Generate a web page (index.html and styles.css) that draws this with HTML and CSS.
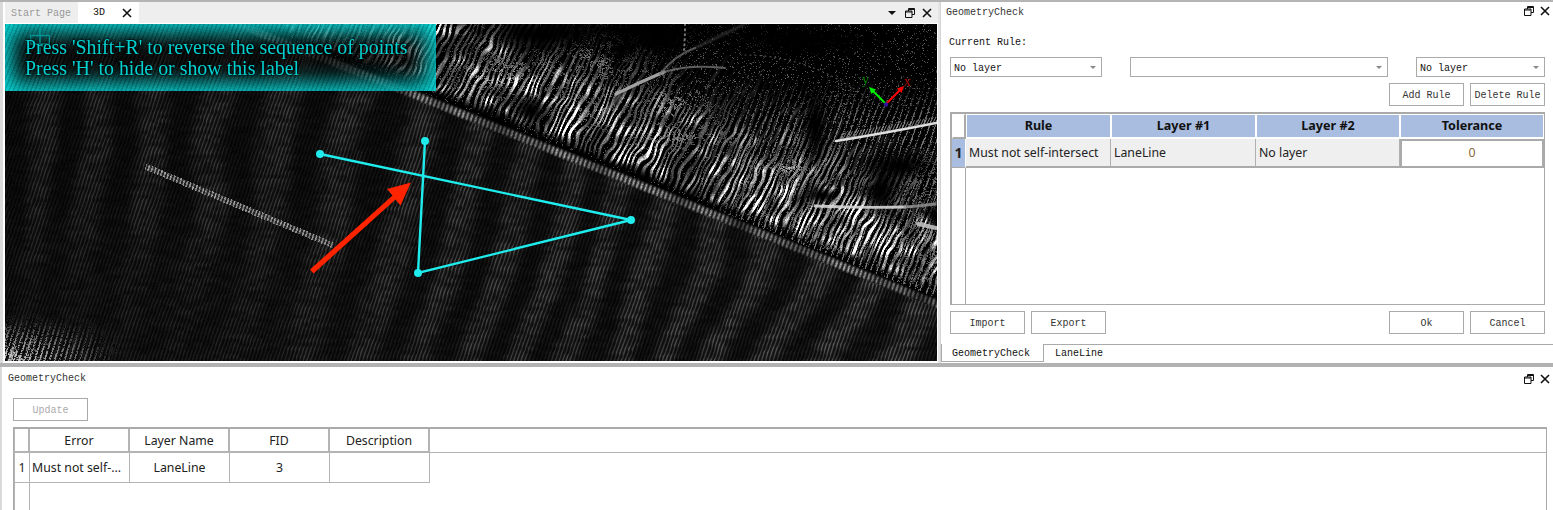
FILE: index.html
```html
<!DOCTYPE html>
<html lang="en">
<head>
<meta charset="utf-8">
<title>GeometryCheck</title>
<link rel="stylesheet" href="styles.css">
</head>
<body>
<svg class="defs" width="0" height="0" aria-hidden="true">
  <symbol id="i-restore" viewBox="0 0 10 10"><path d="M3.5 .5h6v6h-2.5M3.5 .5v2.5M3.5 1.5h6" fill="none" stroke="#111" stroke-width="1"/><path d="M.5 3h6.5v6.5h-6.5z" fill="none" stroke="#111"/><path d="M.5 4h6.5" stroke="#111"/></symbol>
  <symbol id="i-close" viewBox="0 0 10 10"><path d="M1 1l8 8M9 1l-8 8" fill="none" stroke="#111" stroke-width="1.6"/></symbol>
</svg>
<div class="app">
  <div class="top">
    <section class="doc">
      <div class="tabbar">
        <div class="tab tab-off">Start Page</div>
        <div class="tab tab-on">3D<svg class="ic tab-x"><use href="#i-close"/></svg></div>
        <div class="tabbar-tools">
          <span class="menu-arrow"></span>
          <svg class="ic"><use href="#i-restore"/></svg>
          <svg class="ic"><use href="#i-close"/></svg>
        </div>
      </div>
      <div class="viewer">
        <canvas id="cloud" class="cloud" width="932" height="337"></canvas>
        <svg class="overlay" viewBox="5 24 932 337" width="932" height="337">
          <polyline class="poly" points="320,154 631,220 418,273 425,141"/>
          <circle class="pt" cx="320" cy="154" r="4"/>
          <circle class="pt" cx="425" cy="141" r="4"/>
          <circle class="pt" cx="418" cy="273" r="4"/>
          <circle class="pt" cx="631" cy="220" r="4"/>
          <path class="red" d="M313.5 273.5L310 269.5L392.5 195.5L387 189L411 182.5L400.5 205.5L395.5 199.500Z"/>
          <path class="ax-x" d="M886 104L900 90"/><path class="ax-xh" d="M904 86L897 88.500L901.500 93Z"/>
          <path class="ax-y" d="M886 104L873 91"/><path class="ax-yh" d="M869 87L871.500 94L876 89.500Z"/>
          <circle class="ax-o" cx="886" cy="104.500" r="2.200"/>
          <text class="ax-tx" x="904" y="86">x</text>
          <text class="ax-ty" x="862" y="84">y</text>
        </svg>
        <div class="hint">
          <svg class="ime" width="20" height="24" viewBox="0 0 20 24"><path d="M.5 6.500h19v8.500h-19zM10 0v24" fill="none" stroke="#0aa" stroke-width="1.500"/></svg>
          <p>Press 'Shift+R' to reverse the sequence of points</p>
          <p>Press 'H' to hide or show this label</p>
        </div>
      </div>
    </section>
    <div class="vsplit"></div>
    <section class="side">
      <header class="title"><span>GeometryCheck</span><span class="tools"><svg class="ic"><use href="#i-restore"/></svg><svg class="ic"><use href="#i-close"/></svg></span></header>
      <div class="side-body">
        <div class="cur">Current Rule:</div>
        <div class="combos">
          <div class="combo c1">No layer<i></i></div>
          <div class="combo c2"><i></i></div>
          <div class="combo c3">No layer<i></i></div>
        </div>
        <div class="btnrow end">
          <button class="btn">Add Rule</button>
          <button class="btn">Delete Rule</button>
        </div>
        <div class="gridwrap rules">
          <table class="rt">
            <colgroup><col class="r0"><col class="r1"><col class="r1"><col class="r2"><col class="r2"></colgroup>
            <thead><tr><th class="corner"></th><th>Rule</th><th>Layer #1</th><th>Layer #2</th><th>Tolerance</th></tr></thead>
            <tbody>
              <tr class="sel"><th>1</th><td>Must not self-intersect</td><td>LaneLine</td><td>No layer</td><td class="cur-cell">0</td></tr>
              <tr class="fill"><th></th><td colspan="4"></td></tr>
            </tbody>
          </table>
        </div>
        <div class="btnrow between">
          <div class="btngroup"><button class="btn">Import</button><button class="btn">Export</button></div>
          <div class="btngroup"><button class="btn">Ok</button><button class="btn">Cancel</button></div>
        </div>
      </div>
      <div class="subtabs">
        <div class="subtab on">GeometryCheck</div>
        <div class="subtab">LaneLine</div>
      </div>
    </section>
  </div>
  <div class="hsplit"></div>
  <section class="bottom">
    <header class="title btitle"><span>GeometryCheck</span><span class="tools"><svg class="ic"><use href="#i-restore"/></svg><svg class="ic"><use href="#i-close"/></svg></span></header>
    <button class="btn off" disabled>Update</button>
    <div class="gridwrap errors">
      <table class="et">
        <colgroup><col class="e0"><col class="e1"><col class="e1"><col class="e1"><col class="e1"><col></colgroup>
        <thead><tr><th class="corner"></th><th>Error</th><th>Layer Name</th><th>FID</th><th>Description</th><th class="rest"></th></tr></thead>
        <tbody>
          <tr><th>1</th><td class="left">Must not self-...</td><td>LaneLine</td><td>3</td><td></td><td class="rest"></td></tr>
          <tr class="fill"><th></th><td colspan="5" class="rest"></td></tr>
        </tbody>
      </table>
    </div>
  </section>
</div>
<script src="script.js"></script>
</body>
</html>
```
FILE: styles.css
```css
* { box-sizing: border-box; }
html, body { margin: 0; height: 100%; overflow: hidden; background: #fff; }
.defs { position: absolute; }
.app { width: 1553px; height: 510px; display: flex; flex-direction: column; overflow: hidden; border-top: 2px solid #b4b4b4; font: 10px/12px "Liberation Mono", monospace; color: #222; }
.top { display: flex; height: 361px; flex: none; }
.doc { width: 938px; flex: none; display: flex; flex-direction: column; border-left: 3px solid #dadada; padding-left: 2px; }
.tabbar { height: 21px; flex: none; display: flex; background: #eee; margin-bottom: 1px; }
.tab { height: 21px; line-height: 23px; }
.tab-off { width: 73px; padding-left: 6px; color: #999; }
.tab-on { width: 61px; background: #fff; padding-left: 15px; display: flex; align-items: center; color: #111; }
.tab-x { margin-left: 17px; width: 9px; height: 9px; }
.ic { width: 10px; height: 10px; display: block; flex: none; }
.tabbar-tools { margin-left: auto; display: flex; align-items: center; gap: 7px; padding-right: 6px; }
.menu-arrow { width: 0; height: 0; border: 4px solid transparent; border-top: 4px solid #111; border-bottom: 0; margin-right: 2px; }
.viewer { position: relative; width: 932px; height: 337px; background: #000; }
.cloud { display: block; }
.overlay { position: absolute; left: 0; top: 0; }
.poly { fill: none; stroke: #1fecec; stroke-width: 2.4; }
.pt { fill: #1fecec; }
.red { fill: #ff2400; }
.ax-x { stroke: #f00; stroke-width: 2; } .ax-xh { fill: #f00; }
.ax-y { stroke: #0e0; stroke-width: 2; } .ax-yh { fill: #0e0; }
.ax-o { fill: #33109a; }
.ax-tx, .ax-ty { font: 14px "Liberation Serif", serif; }
.ax-tx { fill: #b00000; } .ax-ty { fill: #008000; }
.hint { position: absolute; left: 0; top: 0; width: 431px; height: 67px; padding: 13px 0 0 20px; background: rgba(0, 0, 0, .55); box-shadow: inset 0 0 20px 8px rgba(0, 226, 226, .95); font: 19.900px/20.500px "Liberation Serif", serif; color: #00d2d2; text-shadow: 0 0 3px #000, 0 0 2px #000; }
.hint::before { content: ""; position: absolute; inset: 0; background: repeating-linear-gradient(112deg, rgba(0, 0, 0, .14) 0 1.500px, rgba(255, 255, 255, .03) 1.500px 4px); }
.hint p { margin: 0; position: relative; white-space: nowrap; }
.ime { position: absolute; left: 25px; top: 5px; opacity: .75; }
.vsplit { width: 3px; flex: none; background: #e4e4e4; border-right: 1px solid #d4d4d4; }
.side { flex: 1; display: flex; flex-direction: column; min-width: 0; }
.title { display: flex; justify-content: space-between; align-items: center; height: 18px; padding-left: 5px; color: #333; line-height: 16px; }
.title > span:first-child { padding-top: 4px; }
.tools { display: flex; gap: 6px; padding-right: 3px; }
.side-body { flex: 1; padding: 15px 8px 0 9px; }
.cur { height: 12px; margin-left: -1px; color: #111; line-height: 16px; }
.combos { display: flex; margin-top: 10px; height: 20px; }
.combo { position: relative; height: 20px; border: 1px solid #aaa; padding: 5px 0 0 3px; color: #111; }
.combo i { position: absolute; right: 5px; top: 8px; border: 3px solid transparent; border-top: 3px solid #888; border-bottom: 0; }
.c1 { width: 152px; }
.c2 { width: 258px; margin-left: 28px; }
.c3 { width: 129px; margin-left: 28px; }
.btnrow { display: flex; }
.end { justify-content: flex-end; gap: 6px; margin-top: 6px; }
.between { justify-content: space-between; margin-top: 6px; }
.btngroup { display: flex; gap: 6px; }
.btn { width: 75px; height: 23px; padding: 3px 0 0; background: #fff; border: 1px solid #aaa; border-radius: 0; font: 10px/12px "Liberation Mono", monospace; color: #333; white-space: nowrap; }
.off { color: #aaa; margin-left: 13px; display: block; }
.gridwrap { border: 1px solid #aaa; overflow: hidden; background: #fff; }
table { border-collapse: separate; border-spacing: 0; table-layout: fixed; font: 12.300px/16px "Noto Sans", sans-serif; }
th, td { padding: 0; }
.rules { margin-top: 6px; height: 193px; border-width: 2px 1px 1px 2px; }
.rt { width: 592px; height: 190px; }
.r0 { width: 14px; } .r1 { width: 145px; } .r2 { width: 144px; }
.rt thead th { height: 25px; background: #a8bddf; color: #111; font-weight: 700; font-size: 12.600px; border: 1px solid #fff; border-width: 1px 1px 2px 1px; }
.rt thead th.corner { background: #fff; border-right: 2px solid #aaa; border-bottom: 2px solid #aaa; }
.rt .sel { height: 29px; }
.rt .sel th { background: #a8bddf; font-weight: 700; border-right: 1px solid #fff; border-bottom: 1px solid #aaa; font-size: 14px; }
.rt .sel td { background: #efefef; border-right: 1px solid #b0b0b0; border-bottom: 2px solid #aaa; padding-left: 3px; color: #222; }
.rt .sel td.cur-cell { background: #fff; padding: 0 0 2px; text-align: center; border: 2px solid #aaa; color: #8a6a3a; }
.rt .fill th { border-right: 1px solid #aaa; }
.subtabs { display: flex; height: 18px; margin-top: 9px; flex: none; border-top: 1px solid #aaa; margin-bottom: 1px; }
.subtab { line-height: 17px; padding: 0 11px; color: #111; }
.subtab.on { width: 103px; margin-top: -1px; height: 18px; border: 1px solid #aaa; border-top: 0; background: #fff; line-height: 20px; padding: 0 0 0 10px; position: relative; }
.hsplit { height: 4px; flex: none; background: #b2b2b2; }
.bottom { flex: 1; min-height: 0; border-left: 2px solid #dadada; }
.btitle { height: 21px; padding: 2px 0 0 6px; }
.btitle > span:first-child { padding-top: 0; }
.btitle .tools { padding-right: 3px; }
.bottom .off { margin: 10px 0 0 11px; }
.errors { margin: 6px 6px 0 11px; height: 90px; border-width: 2px 1px 0 1px; }
.et { width: 100%; height: 90px; color: #222; }
.e0 { width: 16px; } .e1 { width: 100px; }
.et thead th { height: 24px; padding-top: 1px; font-weight: 400; color: #222; border-right: 2px solid #b4b4b4; border-bottom: 2px solid #b4b4b4; }
.et thead th.corner { border-left: 1px solid #b4b4b4; }
.et thead th.rest { border-right: 0; border-bottom: 1px solid #b4b4b4; }
.et tbody tr:first-child { height: 30px; }
.et tbody th { font-weight: 400; border-left: 1px solid #b4b4b4; border-right: 1px solid #b4b4b4; border-bottom: 1px solid #b4b4b4; }
.et tbody td { text-align: center; border-right: 1px solid #b4b4b4; border-bottom: 1px solid #b4b4b4; }
.et td.left { text-align: left; padding-left: 2px; white-space: nowrap; }
.et td.rest { border: 0; }
.et .fill th { border-bottom: 0; }
```
FILE: script.js
```js
(function () {
  var cv = document.getElementById('cloud');
  var ctx = cv.getContext('2d');
  var W = cv.width, H = cv.height;
  var seed = 12345;
  function rnd() { seed = (seed * 1664525 + 1013904223) >>> 0; return seed / 4294967296; }
  var TS = 256, tbl = new Float32Array(TS * TS);
  for (var i = 0; i < TS * TS; i++) tbl[i] = rnd();
  function vn(x, y) {
    var xi = Math.floor(x), yi = Math.floor(y), fx = x - xi, fy = y - yi;
    fx = fx * fx * (3 - 2 * fx); fy = fy * fy * (3 - 2 * fy);
    function g(a, b) { return tbl[((b & 255) << 8) | (a & 255)]; }
    return (g(xi, yi) * (1 - fx) + g(xi + 1, yi) * fx) * (1 - fy) + (g(xi, yi + 1) * (1 - fx) + g(xi + 1, yi + 1) * fx) * fy;
  }
  function gs(x, y, cx, cy, rx, ry) { var a = (x - cx) / rx, b = (y - cy) / ry; return Math.exp(-(a * a + b * b)); }
  function sst(a, b, x) { var t = Math.min(1, Math.max(0, (x - a) / (b - a))); return t * t * (3 - 2 * t); }
  var TAU = Math.PI * 2;
  var blobs = [[500, 72, 30, 18, .8], [600, 60, 32, 20, .55], [555, 85, 26, 16, .3], [673, 102, 24, 15, .7], [593, 113, 22, 10, .7], [683, 135, 34, 10, .55], [790, 167, 18, 9, 1], [925, 172, 22, 16, .55], [928, 238, 16, 30, .55], [12, 358, 22, 16, 1.1]];
  var holes = [[815, 125, 10, 32], [822, 195, 20, 9], [880, 190, 16, 22], [900, 165, 30, 12], [935, 215, 9, 10], [620, 50, 14, 10], [530, 110, 12, 12], [660, 40, 30, 16], [540, 35, 50, 14], [800, 40, 70, 14], [640, 30, 90, 8]];
  var img = ctx.createImageData(W, H), D = img.data;
  for (var y = 0; y < H; y++) {
    for (var x = 0; x < W; x++) {
      var px = x + 5, py = y + 24, v = 0;
      var ey = 89 + 0.4 * (px - 400);
      var d = py - ey;
      var s = px + 0.34 * py + 1.4 * vn(px / 40, py / 40);
      var n1 = vn(px / 9, py / 4), fine = rnd();
      /* road surface */
      var lean = 0.12 + 0.36 * px / 937;
      var bc = px + lean * py + 7 * Math.sin(py / 55) + 16 * Math.sin(px / 95) + 18 * vn(px / 70, py / 70);
      var band = 0.5 + 0.5 * Math.sin(TAU * bc / 62);
      band = band * band * (3 - 2 * band);
      var st = 0.5 + 0.5 * Math.sin(TAU * s / 3.7 + n1 * 1.6);
      st = st * st;
      var A = 42 + 34 * px / 937;
      var fadeLL = sst(480, 120, px) * sst(170, 330, py);
      A *= 1 - 0.4 * fadeLL;
      var contrast = 1 - 0.75 * fadeLL;
      var bandV = 1 - contrast * 0.7 * (1 - band);
      var road = A * bandV * (0.22 + 0.78 * st) * (0.6 + 0.7 * n1) + fine * 6;
      if (d > 4) v = road;
      /* road edge stripe */
      if (Math.abs(d) <= 6) {
        var prof = 1 - Math.abs(d) / 6.5;
        var se = 0.5 + 0.5 * Math.sin(TAU * s / 4.6);
        v = Math.max(v, (50 + 125 * vn(px / 20, 3.3)) * sst(0, .7, prof) * (0.2 + 0.8 * se) * (0.75 + 0.4 * fine));
      }
      /* vegetation streaks above the edge */
      if (d < -6) {
        var up = -d;
        var along = px * 0.93 + py * 0.37;
        var perp = px + 0.5 * py + 2 * Math.sin(along / 6) + 5 * vn(px / 12, py / 12);
        var wave = 0.5 + 0.5 * Math.sin(TAU * perp / 6.4);
        wave = sst(.35, .9, wave);
        var brk = vn(along / 5, perp / 3);
        var fade = sst(8, 22, up) * Math.exp(-Math.pow(Math.max(0, up - 40) / 66, 2));
        var pat = vn(px / 14, py / 10);
        var bright = 80 + 300 * pat * pat * (0.6 + px / 1300);
        var veg = bright * wave * fade * (0.35 + 1.0 * brk) * (0.7 + 0.5 * fine);
        /* far, thin strokes */
        var thin = 0;
        if (px > 680) {
          var pt = px + 0.36 * py + 2 * vn(px / 8, py / 30);
          thin = 0.5 + 0.5 * Math.sin(TAU * pt / 6.4);
          thin = sst(.72, 1, thin) * (fine > .35 ? 1 : .2) * 120 * sst(70, 130, py) * sst(680, 760, px);
        }
        v = Math.max(veg, thin);
        /* sparse speckle everywhere */
        var sp = vn(px / 24, py / 24);
        if (fine > 0.975 - sp * 0.08) v = Math.max(v, 45 + 60 * rnd());
      }
      /* speckle blobs */
      var bl = 0;
      for (var b = 0; b < blobs.length; b++) bl += blobs[b][4] * gs(px, py, blobs[b][0], blobs[b][1], blobs[b][2], blobs[b][3]);
      if (bl > 0.02) {
        var bn = vn(px / 3.5, py / 3.5);
        if (bn > 0.66 - bl * 0.3 && rnd() < 0.25 + bl * .5) v = Math.max(v, 70 + 130 * Math.min(1, bl) * rnd());
      }
      /* black holes */
      var h = 1;
      for (var k = 0; k < holes.length; k++) h *= 1 - gs(px, py, holes[k][0], holes[k][1], holes[k][2], holes[k][3]);
      v *= h;
      /* bottom-left brighter strokes */
      if (px < 160 && py > 300) {
        var q = Math.pow(sst(300, 360, py) * sst(160, 10, px), 1.2);
        var sq = 0.5 + 0.5 * Math.sin(TAU * s / 5);
        v = Math.max(v, 190 * q * sst(.4, .9, sq) * (fine > .3 ? 1 : .2));
      }
      /* painted stripe on road */
      var t = ((px - 145) * 188 + (py - 166) * 79) / (188 * 188 + 79 * 79);
      if (t > 0 && t < 1) {
        var dl = Math.abs(py - (166 + 79 * t) - (px - (145 + 188 * t)) * 0.42) * 0.92;
        if (dl < 3) {
          var ss = 0.5 + 0.5 * Math.sin(TAU * s / 3.6);
          v = Math.max(v, (100 + 70 * fine) * (0.25 + 0.75 * sst(.25, .75, ss)));
        }
      }
      var o = (y * W + x) * 4, c = Math.min(255, v);
      D[o] = D[o + 1] = D[o + 2] = c; D[o + 3] = 255;
    }
  }
  ctx.putImageData(img, 0, 0);
  ctx.translate(-5, -24);
  ctx.lineCap = 'round';
  function stroke(pts, col, w, blur) {
    ctx.save();
    ctx.strokeStyle = col; ctx.lineWidth = w;
    if (blur) ctx.filter = 'blur(' + blur + 'px)';
    ctx.beginPath(); ctx.moveTo(pts[0], pts[1]);
    if (pts.length === 4) ctx.lineTo(pts[2], pts[3]);
    else if (pts.length === 6) ctx.quadraticCurveTo(pts[2], pts[3], pts[4], pts[5]);
    ctx.stroke(); ctx.restore();
  }
  /* tree limbs */
  stroke([616, 94, 640, 82, 664, 72], 'rgba(175,175,175,.9)', 3.5, .6);
  stroke([664, 72, 690, 64, 725, 68], 'rgba(120,120,120,.75)', 2, .6);
  stroke([660, 74, 675, 55, 695, 48], 'rgba(115,115,115,.7)', 2.2, .7);
  stroke([695, 48, 720, 36, 745, 24], 'rgba(100,100,100,.5)', 2, .8);
  stroke([620, 95, 612, 105, 600, 118], 'rgba(140,140,140,.6)', 3, 1);
  ctx.save(); ctx.setLineDash([1, 4]);
  stroke([685, 24, 685, 40, 684, 50], 'rgba(130,130,130,.9)', 2);
  stroke([745, 55, 810, 55, 870, 100], 'rgba(110,110,110,.7)', 1.2);
  ctx.restore();
  /* long bright bars */
  stroke([836, 141, 880, 134, 936, 123], 'rgba(235,235,235,.95)', 2.6, .4);
  stroke([815, 206, 860, 208, 905, 207], 'rgba(215,215,215,.9)', 2.8, .5);
  stroke([905, 207, 920, 206, 935, 204], 'rgba(150,150,150,.8)', 3, .7);
  stroke([918, 224, 928, 226, 936, 228], 'rgba(190,190,190,.9)', 4, .7);
  for (var f = 0; f < 32; f++) {
    var fx = 840 + f * 3.1;
    stroke([fx, 140 - (fx - 836) * .176, fx + 3, 134 - (fx - 836) * .176], 'rgba(170,170,170,.75)', 1);
  }
})();
```
